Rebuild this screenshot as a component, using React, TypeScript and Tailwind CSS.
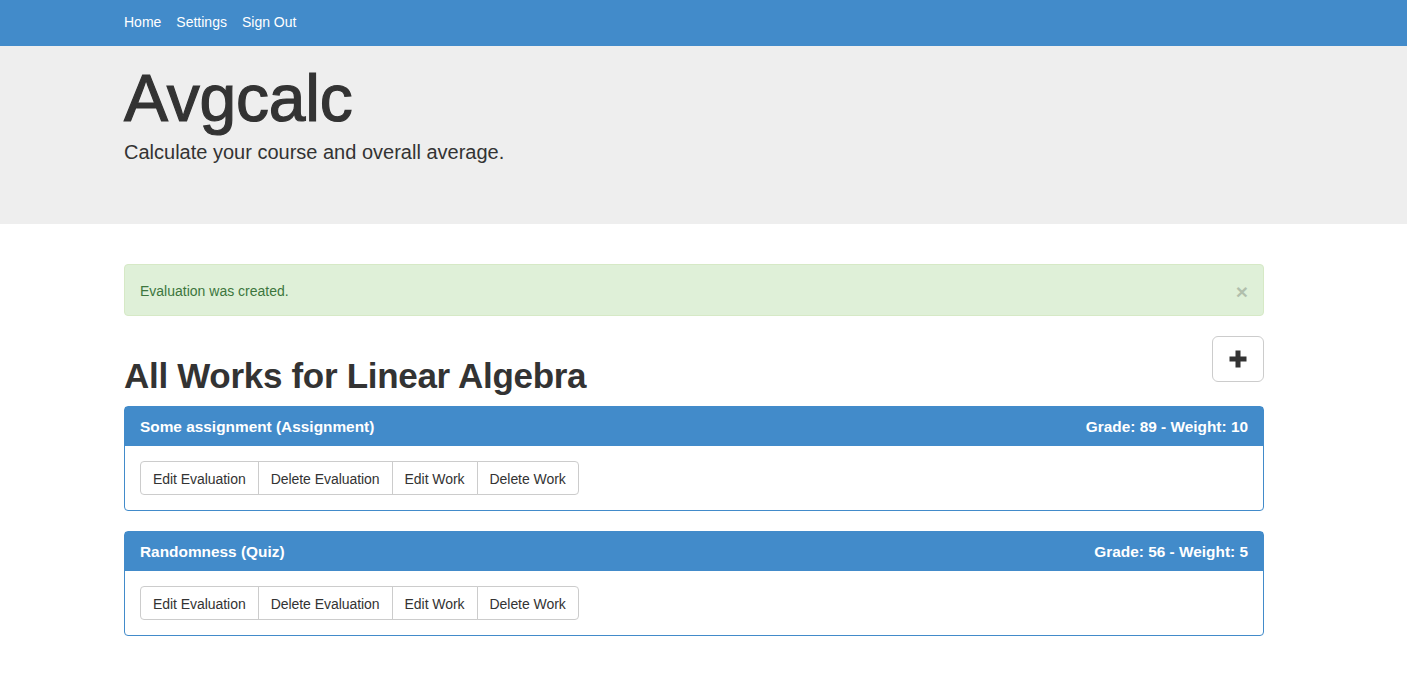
const works = [
  { title: "Some assignment (Assignment)", grade: 89, weight: 10 },
  { title: "Randomness (Quiz)", grade: 56, weight: 5 },
];

const actions = ["Edit Evaluation", "Delete Evaluation", "Edit Work", "Delete Work"];

const App = () => {
  return (
    <div className="min-h-screen bg-white font-['Liberation_Sans',Arial,sans-serif] text-[14px] text-[#333]">
      <nav className="h-[46px] bg-[#428bca]">
        <div className="ml-[124px] flex h-full w-[1140px] items-center gap-[15px] pb-[2px] text-[14px] text-white">
          <a href="#">Home</a>
          <a href="#">Settings</a>
          <a href="#">Sign Out</a>
        </div>
      </nav>

      <header className="h-[178px] bg-[#eeeeee]">
        <div className="ml-[124px] w-[1140px] pt-[16px]">
          <h1 className="text-[66px] leading-[1.1] tracking-[-0.2px] [-webkit-text-stroke:1.2px_#333]">
            Avgcalc
          </h1>
          <p className="mt-[3px] text-[20px] leading-[1.4]">
            Calculate your course and overall average.
          </p>
        </div>
      </header>

      <main className="ml-[124px] w-[1140px] pt-[40px]">
        <div className="flex h-[52px] items-center justify-between rounded-[4px] border border-[#d6e9c6] bg-[#dff0d8] px-[15px] pt-[2px] text-[#3c763d]">
          <span>Evaluation was created.</span>
          <span className="text-[21px] font-bold leading-none text-black opacity-20">×</span>
        </div>

        <div className="mt-[20px] flex items-start justify-between">
          <h1 className="mt-[20px] text-[35px] font-bold leading-[1.15] tracking-[-0.3px]">
            All Works for Linear Algebra
          </h1>
          <button className="flex h-[46px] w-[52px] items-center justify-center rounded-[6px] border border-[#ccc] bg-white">
            <svg width="20" height="20" viewBox="0 0 20 20" fill="#333">
              <rect x="7.5" y="1.5" width="5" height="17" />
              <rect x="1.5" y="7.5" width="17" height="5" />
            </svg>
          </button>
        </div>

        <div className="mt-[10px] flex flex-col gap-[20px]">
          {works.map((w) => (
            <div key={w.title} className="rounded-[4px] border border-[#428bca]">
              <div className="flex h-[39px] items-center justify-between bg-[#428bca] px-[15px] text-[15.4px] font-bold text-white">
                <span>{w.title}</span>
                <span>
                  Grade: {w.grade} - Weight: {w.weight}
                </span>
              </div>
              <div className="p-[15px]">
                <div className="inline-flex">
                  {actions.map((a, i) => (
                    <button
                      key={a}
                      className={
                        "h-[34px] border border-[#ccc] bg-white px-[12px] pt-[2px] text-[14px] tracking-[-0.05px] text-[#333] " +
                        (i === 0 ? "rounded-l-[4px]" : "-ml-px ") +
                        (i === actions.length - 1 ? "rounded-r-[4px]" : "")
                      }
                    >
                      {a}
                    </button>
                  ))}
                </div>
              </div>
            </div>
          ))}
        </div>
      </main>
    </div>
  );
};

export default App;
